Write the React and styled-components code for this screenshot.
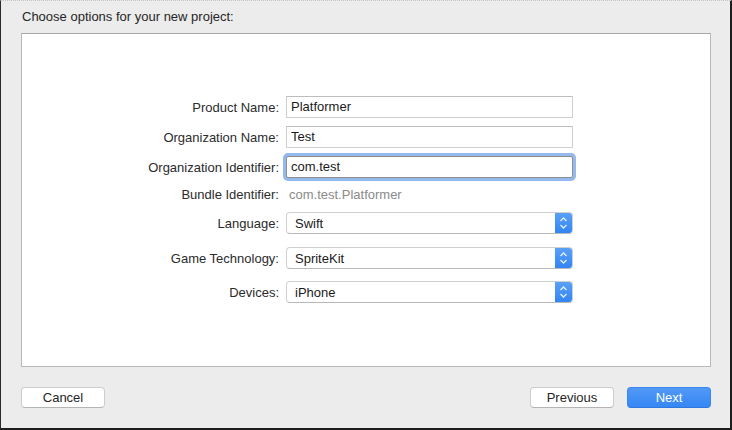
import React from "react";
import styled, { createGlobalStyle } from "styled-components";

const fields = [
  { label: "Product Name:", value: "Platformer", kind: "text", top: 62 },
  { label: "Organization Name:", value: "Test", kind: "text", top: 8 },
  { label: "Organization Identifier:", value: "com.test", kind: "focus", top: 8 },
  { label: "Bundle Identifier:", value: "com.test.Platformer", kind: "static", top: 6 },
  { label: "Language:", value: "Swift", kind: "popup", top: 8 },
  { label: "Game Technology:", value: "SpriteKit", kind: "popup", top: 13 },
  { label: "Devices:", value: "iPhone", kind: "popup", top: 12 },
];

const Global = createGlobalStyle`
  html, body { margin: 0; padding: 0; background: #ececec; }
  body { font-family: "Helvetica Neue", "Liberation Sans", Arial, sans-serif; }
`;

const Sheet = styled.div`
  width: 732px;
  height: 430px;
  box-sizing: border-box;
  background: #ececec;
  border-top: 1px dotted #c4c4c4;
  border-left: 1px solid #2a2a2a;
  border-right: 2px solid #1e1e1e;
  border-bottom: 2px solid #1e1e1e;
  padding: 0 19px 0 20px;
  display: flex;
  flex-direction: column;
  color: #222;
`;

const Heading = styled.div`
  height: 32px;
  line-height: 31px;
  font-size: 13px;
  color: #262626;
  padding-left: 1px;
`;

const Panel = styled.div`
  height: 334px;
  box-sizing: border-box;
  background: #fff;
  border: 1px solid #b9b9b9;
  border-top-color: #a8a8a8;
  display: flex;
  flex-direction: column;
`;

const Row = styled.div`
  display: grid;
  grid-template-columns: 257px 287px;
  column-gap: 7px;
  align-items: center;
  margin-top: ${(p) => p.$top}px;
  height: ${(p) => (p.$kind === "static" ? 20 : 22)}px;
`;

const Label = styled.div`
  text-align: right;
  font-size: 13px;
  color: #2b2b2b;
  white-space: nowrap;
`;

const TextBox = styled.div`
  height: 22px;
  box-sizing: border-box;
  border: 1px solid #cfcfcf;
  border-top-color: #bdbdbd;
  padding-left: 4px;
  font-size: 13px;
  line-height: 20px;
  color: #1a1a1a;
  background: #fff;
  ${(p) =>
    p.$focus &&
    `
    border-color: #8e8e8e;
    box-shadow: 0 0 0 3px #94b9ee;
    border-radius: 2px;
  `}
`;

const Static = styled.div`
  font-size: 13px;
  color: #8a8a8a;
  padding-left: 3px;
`;

const Popup = styled.div`
  height: 22px;
  box-sizing: border-box;
  border: 1px solid #d0d0d0;
  border-bottom-color: #b8b8b8;
  border-radius: 4px;
  display: flex;
  align-items: center;
  background: #fff;
  overflow: hidden;
`;

const PopupText = styled.div`
  flex: 1;
  padding-left: 8px;
  font-size: 13px;
  color: #1a1a1a;
`;

const Cap = styled.div`
  width: 17px;
  height: 100%;
  background: linear-gradient(#5aa0f7, #3385f4);
  display: flex;
  align-items: center;
  justify-content: center;
`;

const Footer = styled.div`
  flex: 1;
  display: flex;
  align-items: center;
  justify-content: space-between;
  padding-top: 0px;
`;

const Group = styled.div`
  display: flex;
  gap: 13px;
`;

const Button = styled.div`
  width: 84px;
  height: 21px;
  box-sizing: border-box;
  border-radius: 4px;
  font-size: 13px;
  display: flex;
  align-items: center;
  justify-content: center;
  background: ${(p) => (p.$primary ? "linear-gradient(#5299f6, #3587f4)" : "#fff")};
  color: ${(p) => (p.$primary ? "#fff" : "#262626")};
  border: 1px solid ${(p) => (p.$primary ? "#3a86ee" : "#cdcdcd")};
  border-bottom-color: ${(p) => (p.$primary ? "#2f77df" : "#b5b5b5")};
`;

const Arrows = () => (
  <svg width="9" height="14" viewBox="0 0 9 14">
    <path d="M1.5 5 L4.5 2 L7.5 5 M1.5 9 L4.5 12 L7.5 9" fill="none" stroke="#e6f0ff" strokeWidth="1.3" />
  </svg>
);

const Field = ({ f }) => {
  if (f.kind === "static") return <Static>{f.value}</Static>;
  if (f.kind === "popup")
    return (
      <Popup>
        <PopupText>{f.value}</PopupText>
        <Cap>
          <Arrows />
        </Cap>
      </Popup>
    );
  return <TextBox $focus={f.kind === "focus"}>{f.value}</TextBox>;
};

export default function App() {
  return (
    <>
      <Global />
      <Sheet>
        <Heading>Choose options for your new project:</Heading>
        <Panel>
          {fields.map((f) => (
            <Row key={f.label} $top={f.top} $kind={f.kind}>
              <Label>{f.label}</Label>
              <Field f={f} />
            </Row>
          ))}
        </Panel>
        <Footer>
          <Button>Cancel</Button>
          <Group>
            <Button>Previous</Button>
            <Button $primary>Next</Button>
          </Group>
        </Footer>
      </Sheet>
    </>
  );
}
